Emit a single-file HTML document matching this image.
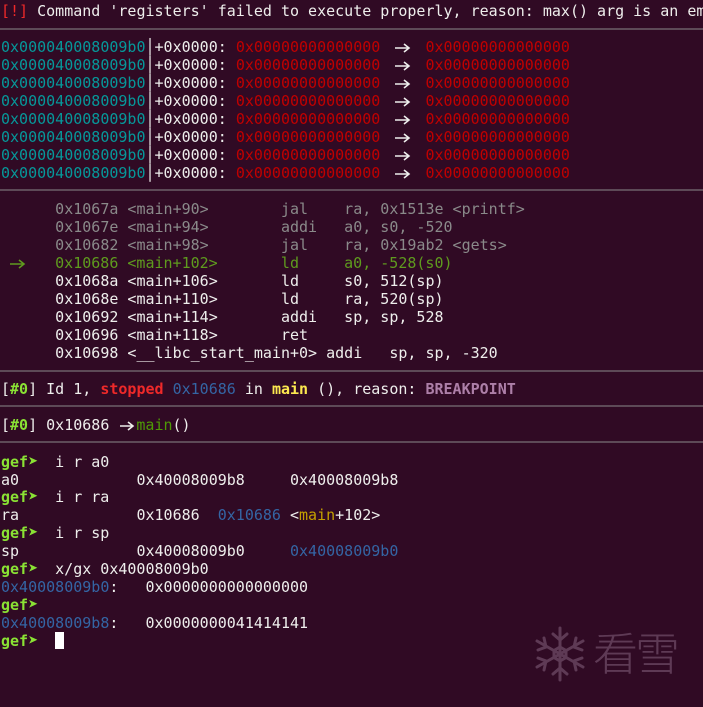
<!DOCTYPE html>
<html><head><meta charset="utf-8"><style>
html,body{margin:0;padding:0;background:#300a24;width:703px;height:707px;overflow:hidden;}
.l{position:absolute;left:1px;white-space:pre;font-family:"DejaVu Sans Mono","Liberation Mono",monospace;font-size:15px;line-height:18px;color:#eeeeec;letter-spacing:0;}
.sep{position:absolute;left:0;width:703px;height:2px;background:#5d4a57;}
.c{color:#06989a}.r{color:#c00000}.g{color:#8a8a8a}.cg{color:#5f9b1e}.b{color:#3465a4}
.gf{color:#8ae234;font-weight:bold}.rr{color:#ef2929;font-weight:bold}.y{color:#fce94f;font-weight:bold}
.gr{color:#4e9a06}.o{color:#c4a000}.p{color:#ad7fa8;font-weight:bold}.re{color:#ef2929}
svg.a{display:inline-block;vertical-align:-2px;overflow:visible}
.tri{display:inline-block;width:9px;font-size:17px;overflow:visible}
.cur{display:inline-block;width:9px;height:17px;background:#fff;vertical-align:-3px}
</style></head><body>
<div class="l" style="top:2px"><span class="re">[!]</span> Command 'registers' failed to execute properly, reason: max() arg is an em</div>
<div class="sep" style="top:28px"></div>
<div id="stk"></div>
<div class="l" style="top:38px"><span class="c">0x000040008009b0</span>│+0x0000: <span class="r">0x00000000000000</span>  <svg class="a" width="9" height="12" viewBox="0 0 9 12"><path d="M-3 6H11M6 2L11 6L6 10" stroke="#eeeeec" stroke-width="1.6" fill="none"/></svg>  <span class="r">0x00000000000000</span></div>
<div class="l" style="top:56px"><span class="c">0x000040008009b0</span>│+0x0000: <span class="r">0x00000000000000</span>  <svg class="a" width="9" height="12" viewBox="0 0 9 12"><path d="M-3 6H11M6 2L11 6L6 10" stroke="#eeeeec" stroke-width="1.6" fill="none"/></svg>  <span class="r">0x00000000000000</span></div>
<div class="l" style="top:74px"><span class="c">0x000040008009b0</span>│+0x0000: <span class="r">0x00000000000000</span>  <svg class="a" width="9" height="12" viewBox="0 0 9 12"><path d="M-3 6H11M6 2L11 6L6 10" stroke="#eeeeec" stroke-width="1.6" fill="none"/></svg>  <span class="r">0x00000000000000</span></div>
<div class="l" style="top:92px"><span class="c">0x000040008009b0</span>│+0x0000: <span class="r">0x00000000000000</span>  <svg class="a" width="9" height="12" viewBox="0 0 9 12"><path d="M-3 6H11M6 2L11 6L6 10" stroke="#eeeeec" stroke-width="1.6" fill="none"/></svg>  <span class="r">0x00000000000000</span></div>
<div class="l" style="top:110px"><span class="c">0x000040008009b0</span>│+0x0000: <span class="r">0x00000000000000</span>  <svg class="a" width="9" height="12" viewBox="0 0 9 12"><path d="M-3 6H11M6 2L11 6L6 10" stroke="#eeeeec" stroke-width="1.6" fill="none"/></svg>  <span class="r">0x00000000000000</span></div>
<div class="l" style="top:128px"><span class="c">0x000040008009b0</span>│+0x0000: <span class="r">0x00000000000000</span>  <svg class="a" width="9" height="12" viewBox="0 0 9 12"><path d="M-3 6H11M6 2L11 6L6 10" stroke="#eeeeec" stroke-width="1.6" fill="none"/></svg>  <span class="r">0x00000000000000</span></div>
<div class="l" style="top:146px"><span class="c">0x000040008009b0</span>│+0x0000: <span class="r">0x00000000000000</span>  <svg class="a" width="9" height="12" viewBox="0 0 9 12"><path d="M-3 6H11M6 2L11 6L6 10" stroke="#eeeeec" stroke-width="1.6" fill="none"/></svg>  <span class="r">0x00000000000000</span></div>
<div class="l" style="top:164px"><span class="c">0x000040008009b0</span>│+0x0000: <span class="r">0x00000000000000</span>  <svg class="a" width="9" height="12" viewBox="0 0 9 12"><path d="M-3 6H11M6 2L11 6L6 10" stroke="#eeeeec" stroke-width="1.6" fill="none"/></svg>  <span class="r">0x00000000000000</span></div>
<div class="sep" style="top:189px"></div>
<div class="l g" style="top:200px">      0x1067a &lt;main+90&gt;        jal    ra, 0x1513e &lt;printf&gt;</div>
<div class="l g" style="top:218px">      0x1067e &lt;main+94&gt;        addi   a0, s0, -520</div>
<div class="l g" style="top:236px">      0x10682 &lt;main+98&gt;        jal    ra, 0x19ab2 &lt;gets&gt;</div>
<div class="l cg" style="top:254px"> <svg class="a" width="9" height="12" viewBox="0 0 9 12"><path d="M0 6H14M9 2L14 6L9 10" stroke="#5f9b1e" stroke-width="1.6" fill="none"/></svg>    0x10686 &lt;main+102&gt;       ld     a0, -528(s0)</div>
<div class="l" style="top:272px">      0x1068a &lt;main+106&gt;       ld     s0, 512(sp)</div>
<div class="l" style="top:290px">      0x1068e &lt;main+110&gt;       ld     ra, 520(sp)</div>
<div class="l" style="top:308px">      0x10692 &lt;main+114&gt;       addi   sp, sp, 528</div>
<div class="l" style="top:326px">      0x10696 &lt;main+118&gt;       ret</div>
<div class="l" style="top:344px">      0x10698 &lt;__libc_start_main+0&gt; addi   sp, sp, -320</div>
<div class="sep" style="top:370px"></div>
<div class="l" style="top:380px">[<span class="gf">#0</span>] Id 1, <span class="rr">stopped</span> <span class="b">0x10686</span> in <span class="y">main</span> (), reason: <span class="p">BREAKPOINT</span></div>
<div class="sep" style="top:405px"></div>
<div class="l" style="top:416px">[<span class="gf">#0</span>] 0x10686 <svg class="a" width="18" height="12" viewBox="0 0 18 12"><path d="M2 6H15M10 2L15 6L10 10" stroke="#eeeeec" stroke-width="1.6" fill="none"/></svg><span class="gr">main</span>()</div>
<div class="sep" style="top:441px"></div>
<div class="l" style="top:453px"><span class="gf">gef<span class="tri">➤</span></span>  i r a0</div>
<div class="l" style="top:471px">a0             0x40008009b8     0x40008009b8</div>
<div class="l" style="top:488px"><span class="gf">gef<span class="tri">➤</span></span>  i r ra</div>
<div class="l" style="top:506px">ra             0x10686  <span class="b">0x10686</span> &lt;<span class="o">main</span>+102&gt;</div>
<div class="l" style="top:524px"><span class="gf">gef<span class="tri">➤</span></span>  i r sp</div>
<div class="l" style="top:542px">sp             0x40008009b0     <span class="b">0x40008009b0</span></div>
<div class="l" style="top:560px"><span class="gf">gef<span class="tri">➤</span></span>  x/gx 0x40008009b0</div>
<div class="l" style="top:578px"><span class="b">0x40008009b0</span>:   0x0000000000000000</div>
<div class="l" style="top:596px"><span class="gf">gef<span class="tri">➤</span></span></div>
<div class="l" style="top:614px"><span class="b">0x40008009b8</span>:   0x0000000041414141</div>
<div class="l" style="top:632px"><span class="gf">gef<span class="tri">➤</span></span>  <span class="cur"></span></div>
<svg style="position:absolute;left:532px;top:626px" width="56" height="56" viewBox="0 0 56 56">
<g stroke="#5e3a55" stroke-width="3" fill="none" stroke-linecap="round">
<line x1="28" y1="2" x2="28" y2="54"/><line x1="5" y1="15" x2="51" y2="41"/><line x1="5" y1="41" x2="51" y2="15"/>
<polyline points="21,8 28,14 35,8"/><polyline points="21,48 28,42 35,48"/>
<polyline points="6,24 14,21 12,12"/><polyline points="50,32 42,35 44,44"/>
<polyline points="6,32 14,35 12,44"/><polyline points="50,24 42,21 44,12"/>
<polygon points="28,21 34,24.5 34,31.5 28,35 22,31.5 22,24.5"/>
</g></svg>
<div style="position:absolute;left:593px;top:622px;font-family:'Noto Sans CJK SC',sans-serif;font-size:45px;line-height:58px;color:#5e3a55;font-weight:300;letter-spacing:-3px">看雪</div>
</body></html>
